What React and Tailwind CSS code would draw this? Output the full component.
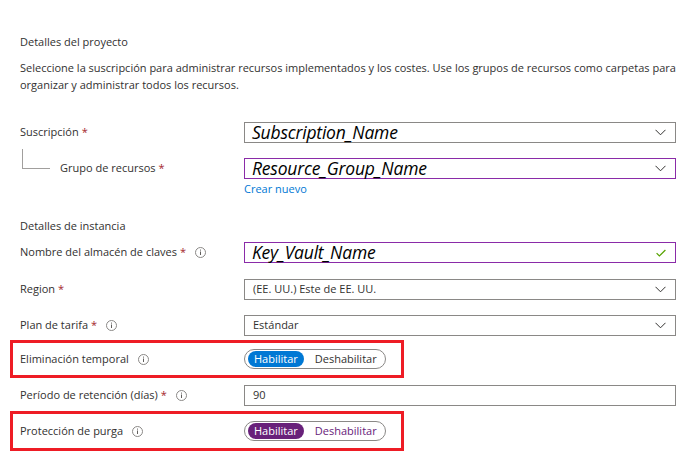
import React from "react";

const font = { fontFamily: '"Segoe UI", "Open Sans", "Noto Sans", sans-serif' };

function Star() {
  return <span className="text-[#a4262c] ml-[3px]">*</span>;
}

function Info() {
  return (
    <svg className="ml-[9px] shrink-0" width="11" height="11" viewBox="0 0 11 11">
      <circle cx="5.5" cy="5.5" r="5" fill="none" stroke="#8a8886" strokeWidth="1" />
      <rect x="5" y="4.5" width="1" height="3.5" fill="#605e5c" />
      <rect x="5" y="2.6" width="1" height="1" fill="#605e5c" />
    </svg>
  );
}

function Chevron() {
  return (
    <svg width="11" height="7" viewBox="0 0 11 7" className="shrink-0">
      <path d="M0.5 0.8 L5.5 5.8 L10.5 0.8" fill="none" stroke="#323130" strokeWidth="1" />
    </svg>
  );
}

function Check() {
  return (
    <svg width="10" height="8" viewBox="0 0 10 8" className="shrink-0">
      <path d="M0.6 4.2 L3.4 7 L9.4 1" fill="none" stroke="#57a300" strokeWidth="1.2" />
    </svg>
  );
}

function Select({ value, italic, purple, check }) {
  return (
    <div
      className={`w-[432px] h-[21px] flex items-center justify-between pl-[8px] pr-[9px] border ${
        purple ? "border-[#8a2ba8]" : "border-[#8a8886]"
      }`}
    >
      <span
        className={
          italic
            ? "italic text-[17.5px] leading-[19px] text-black -ml-[1px] -mt-[1px] tracking-[-0.2px]"
            : "text-[11px] text-[#323130]"
        }
      >
        {value}
      </span>
      {check ? <Check /> : value !== "90" && <Chevron />}
    </div>
  );
}

function Toggle({ purple }) {
  return (
    <div className="w-[142px] h-[20px] rounded-full border border-[#8a8886] flex items-center px-[3px]">
      <span
        className={`h-[16px] px-[6px] rounded-full text-white text-[11px] leading-[16px] ${
          purple ? "bg-[#68217a]" : "bg-[#0078d4]"
        }`}
      >
        Habilitar
      </span>
      <span className={`ml-[11px] text-[11px] ${purple ? "text-[#68217a]" : "text-[#323130]"}`}>
        Deshabilitar
      </span>
    </div>
  );
}

export default function App() {
  return (
    <div className="w-[695px] h-[471px] bg-white pl-[20px] text-[11px] text-[#323130] overflow-hidden" style={font}>
      <p className="pt-[34px] leading-[16px]">Detalles del proyecto</p>
      <p className="mt-[9px] leading-[17px] w-[665px]">
        Seleccione la suscripción para administrar recursos implementados y los costes. Use los grupos de recursos
        como carpetas para organizar y administrar todos los recursos.
      </p>

      <div className="mt-[29px] flex items-center">
        <div className="w-[224px] flex items-center">
          Suscripción
          <Star />
        </div>
        <Select value="Subscription_Name" italic />
      </div>

      <div className="mt-[15px] flex items-center">
        <div className="w-[224px] flex items-center">
          <div className="ml-[2px] -mt-[20px] w-[28px] h-[20px] border-l border-b border-[#a19f9d]" />
          <span className="ml-[10px]">Grupo de recursos</span>
          <Star />
        </div>
        <Select value="Resource_Group_Name" italic purple />
      </div>
      <p className="ml-[224px] mt-[2px] leading-[16px] text-[#0078d4]">Crear nuevo</p>

      <p className="mt-[21px] leading-[16px]">Detalles de instancia</p>

      <div className="mt-[8px] flex items-center">
        <div className="w-[224px] flex items-center">
          Nombre del almacén de claves
          <Star />
          <Info />
        </div>
        <Select value="Key_Vault_Name" italic purple check />
      </div>

      <div className="mt-[16px] flex items-center">
        <div className="w-[224px] flex items-center">
          Region
          <Star />
        </div>
        <Select value="(EE. UU.) Este de EE. UU." />
      </div>

      <div className="mt-[15px] flex items-center">
        <div className="w-[224px] flex items-center">
          Plan de tarifa
          <Star />
          <Info />
        </div>
        <Select value="Estándar" />
      </div>

      <div className="-ml-[10px] mt-[4px] w-[394px] h-[38px] border-[3px] border-[#ee1c25] flex items-center pl-[7px]">
        <div className="w-[224px] flex items-center">
          Eliminación temporal
          <Info />
        </div>
        <Toggle />
      </div>

      <div className="mt-[7px] flex items-center">
        <div className="w-[224px] flex items-center">
          Período de retención (días)
          <Star />
          <Info />
        </div>
        <Select value="90" />
      </div>

      <div className="-ml-[10px] mt-[5px] w-[394px] h-[40px] border-[3px] border-[#ee1c25] flex items-center pl-[7px]">
        <div className="w-[224px] flex items-center">
          Protección de purga
          <Info />
        </div>
        <Toggle purple />
      </div>
    </div>
  );
}
